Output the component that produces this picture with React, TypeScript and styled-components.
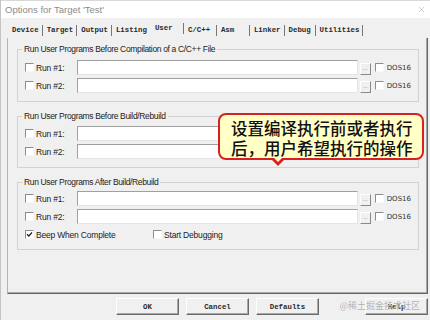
import React from "react";
import styled, { createGlobalStyle } from "styled-components";
import { X } from "lucide-react";

const GlobalStyle = createGlobalStyle`
  html, body {
    margin: 0;
    padding: 0;
    background: #f0f0f0;
  }
  body {
    width: 430px;
    height: 320px;
    overflow: hidden;
    font-family: "Liberation Sans", Arial, sans-serif;
  }
`;

const Window = styled.div`
  position: relative;
  width: 430px;
  height: 320px;
  box-sizing: border-box;
  border-left: 1px solid #c4c4c4;
  background: #f0f0f0;
  display: flex;
  flex-direction: column;
  overflow: hidden;
`;

const TitleBar = styled.div`
  height: 18px;
  flex: none;
  background: #ffffff;
  border-top: 1px solid #d8d8d8;
  box-sizing: border-box;
  display: flex;
  align-items: center;
  justify-content: space-between;
  padding: 0 4px 0 4px;
  font-size: 9.5px;
  color: #8c8c8c;
`;

const Body = styled.div`
  flex: 1;
  display: flex;
  flex-direction: column;
  padding: 4px 2px 0 6px;
`;

const TabStrip = styled.div`
  height: 16px;
  display: flex;
  align-items: center;
  padding-left: 1px;
`;

const Tab = styled.div<{ $active?: boolean; $noEdge?: boolean; $min?: number }>`
  box-sizing: border-box;
  min-width: ${(p) => p.$min ?? 33}px;
  height: 11px;
  line-height: 11px;
  padding: 0 3px 0 4px;
  margin-bottom: ${(p) => (p.$active ? 4 : 0)}px;
  border-right: 1px solid ${(p) => (p.$noEdge ? "transparent" : "#777")};
  font-family: "Liberation Mono", "Courier New", monospace;
  font-weight: bold;
  font-size: 7.4px;
  color: #2a2a2a;
  white-space: nowrap;
`;

const Panel = styled.div`
  height: 256px;
  box-sizing: border-box;
  border-left: 1px solid #b4b4b4;
  border-right: 1px solid #666;
  border-bottom: 1px solid #666;
  box-shadow: inset -1px -1px 0 #a8a8a8;
  padding: 11px 8px 0 9px;
  display: flex;
  flex-direction: column;
  gap: 14px;
`;

const Group = styled.div<{ $top?: number; $bottom?: number }>`
  position: relative;
  border: 1px solid #d2d2d2;
  padding: ${(p) => p.$top ?? 10}px 7px ${(p) => p.$bottom ?? 8}px 7px;
  display: flex;
  flex-direction: column;
  gap: 3px;
`;

const Legend = styled.span`
  position: absolute;
  top: -6px;
  left: 4px;
  padding: 0 2px;
  background: #f0f0f0;
  font-size: 8.5px;
  line-height: 11px;
  letter-spacing: -0.35px;
  color: #222;
  white-space: nowrap;
`;

const Row = styled.div`
  height: 15px;
  display: flex;
  align-items: center;
`;

const Box = styled.span<{ $gap?: number }>`
  flex: none;
  width: 9px;
  height: 9px;
  box-sizing: border-box;
  margin-left: ${(p) => p.$gap ?? 0}px;
  background: #fff;
  border-top: 1px solid #8c8c8c;
  border-left: 1px solid #8c8c8c;
  border-bottom: 1px solid #f8f8f8;
  border-right: 1px solid #f8f8f8;
  display: flex;
  align-items: center;
  justify-content: center;
`;

const Label = styled.span<{ $width?: number }>`
  flex: none;
  width: ${(p) => (p.$width ? `${p.$width}px` : "auto")};
  margin-left: 2px;
  font-size: 8.5px;
  letter-spacing: -0.2px;
  color: #222;
  white-space: nowrap;
`;

const Field = styled.div`
  flex: 1;
  height: 15px;
  box-sizing: border-box;
  background: #fff;
  border-top: 1px solid #a0a0a0;
  border-left: 1px solid #a0a0a0;
  border-bottom: 1px solid #e4e4e4;
  border-right: 1px solid #e4e4e4;
`;

const Browse = styled.div`
  flex: none;
  align-self: flex-end;
  width: 11px;
  height: 12px;
  margin-left: 2px;
  box-sizing: border-box;
  background: #f0f0f0;
  border-top: 1px solid #fff;
  border-left: 1px solid #fff;
  border-bottom: 1px solid #8a8a8a;
  border-right: 1px solid #8a8a8a;
  font-size: 6px;
  line-height: 8px;
  text-align: center;
  color: #777;
`;

const Dos = styled.span`
  margin-left: 3px;
  font-family: "DejaVu Sans", Verdana, sans-serif;
  font-size: 7px;
  color: #333;
`;

const CheckItem = styled.div<{ $width?: number }>`
  width: ${(p) => (p.$width ? `${p.$width}px` : "auto")};
  display: flex;
  align-items: center;
`;

const Buttons = styled.div`
  flex: 1;
  display: flex;
  align-items: flex-start;
  padding: 4px 0 0 109px;
  gap: 7px;
`;

const Btn = styled.div<{ $push?: boolean }>`
  width: 63px;
  height: 17px;
  box-sizing: border-box;
  margin-left: ${(p) => (p.$push ? "auto" : 0)};
  border-top: 1px solid #fff;
  border-left: 1px solid #fff;
  border-bottom: 1px solid #6a6a6a;
  border-right: 1px solid #6a6a6a;
  box-shadow: inset -1px -1px 0 #a8a8a8;
  display: flex;
  align-items: center;
  justify-content: center;
  font-family: "Liberation Mono", "Courier New", monospace;
  font-weight: bold;
  font-size: 7.4px;
  color: #2a2a2a;
`;

const Watermark = styled.span`
  position: absolute;
  right: 10px;
  bottom: 8px;
  font-family: "Noto Sans CJK SC", sans-serif;
  font-size: 9px;
  color: rgba(160, 160, 160, 0.85);
  text-shadow: 0 0 1px #fff;
`;

const Callout = styled.div`
  position: absolute;
  left: 217px;
  top: 113px;
  width: 206px;
  height: 47px;
  box-sizing: border-box;
  border: 2px solid #d92020;
  border-radius: 8px;
  background: #ffffc6;
  padding: 3px 0 0 11px;
  font-family: "Noto Sans CJK SC", sans-serif;
  font-size: 16.5px;
  font-weight: 500;
  line-height: 20px;
  color: #111;
  white-space: nowrap;
  &::before {
    content: "";
    position: absolute;
    left: 50px;
    top: 100%;
    border-left: 8px solid transparent;
    border-right: 8px solid transparent;
    border-top: 8px solid #d92020;
  }
  &::after {
    content: "";
    position: absolute;
    left: 53px;
    top: calc(100% - 1px);
    border-left: 5px solid transparent;
    border-right: 5px solid transparent;
    border-top: 5px solid #ffffc6;
  }
`;

const Check = ({ on, gap }: { on?: boolean; gap?: number }) => (
  <Box $gap={gap}>
    {on && (
      <svg width="7" height="7" viewBox="0 0 7 7">
        <path d="M1 3.2 L2.8 5 L6 1.5" stroke="#222" strokeWidth="1.3" fill="none" />
      </svg>
    )}
  </Box>
);

const RunRow = ({ n }: { n: number }) => (
  <Row>
    <Check />
    <Label $width={41}>Run #{n}:</Label>
    <Field />
    <Browse>...</Browse>
    <Check gap={4} />
    <Dos>DOS16</Dos>
  </Row>
);

const tabs = ["Device", "Target", "Output", "Listing", "User", "C/C++", "Asm", "Linker", "Debug", "Utilities"];

export default function App() {
  return (
    <>
      <GlobalStyle />
      <Window>
        <TitleBar>
          <span>Options for Target 'Test'</span>
          <X size={9} color="#9a9a9a" strokeWidth={1.2} />
        </TitleBar>
        <Body>
          <TabStrip>
            {tabs.map((t) => (
              <Tab
                key={t}
                $active={t === "User"}
                $noEdge={t === "Listing"}
                $min={t === "Debug" ? 31 : 33}
              >
                {t}
              </Tab>
            ))}
          </TabStrip>
          <Panel>
            <Group>
              <Legend>Run User Programs Before Compilation of a C/C++ File</Legend>
              <RunRow n={1} />
              <RunRow n={2} />
            </Group>
            <Group $top={9} $bottom={8}>
              <Legend>Run User Programs Before Build/Rebuild</Legend>
              <RunRow n={1} />
              <RunRow n={2} />
            </Group>
            <Group $top={8} $bottom={7}>
              <Legend>Run User Programs After Build/Rebuild</Legend>
              <RunRow n={1} />
              <RunRow n={2} />
              <Row>
                <CheckItem $width={128}>
                  <Check on />
                  <Label>Beep When Complete</Label>
                </CheckItem>
                <CheckItem>
                  <Check />
                  <Label>Start Debugging</Label>
                </CheckItem>
              </Row>
            </Group>
          </Panel>
          <Buttons>
            <Btn>OK</Btn>
            <Btn>Cancel</Btn>
            <Btn>Defaults</Btn>
            <Btn $push>Help</Btn>
          </Buttons>
        </Body>
        <Callout>
          设置编译执行前或者执行
          <br />
          后，用户希望执行的操作
        </Callout>
        <Watermark>@稀土掘金技术社区</Watermark>
      </Window>
    </>
  );
}
